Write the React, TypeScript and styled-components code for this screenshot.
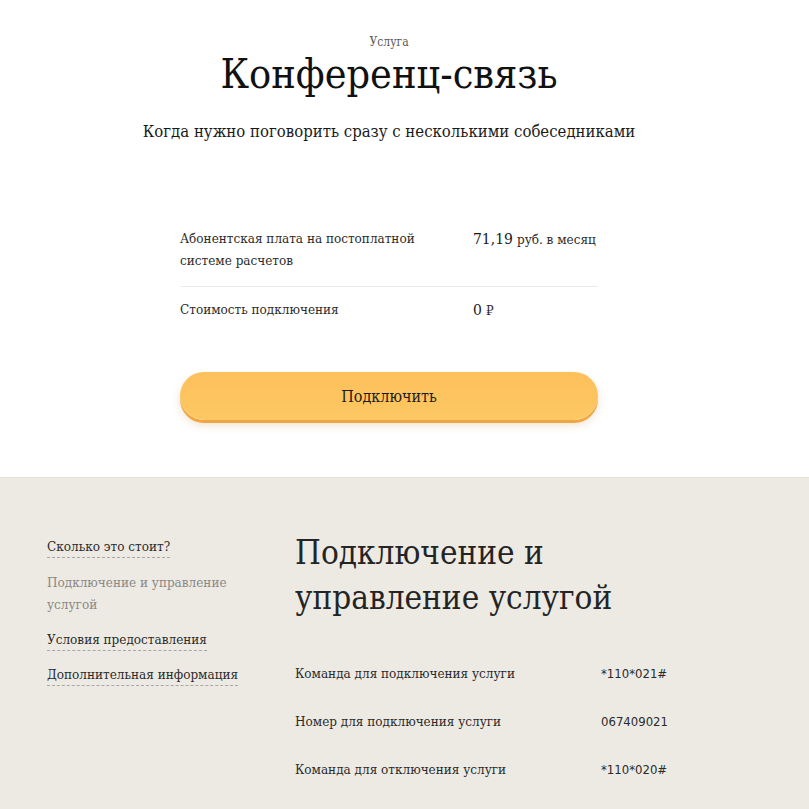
import styled, { createGlobalStyle } from 'styled-components'

const GlobalStyle = createGlobalStyle`
  html, body {
    margin: 0;
    padding: 0;
    background: #ffffff;
  }
  body {
    font-family: "DejaVu Serif Condensed", "DejaVu Serif", serif;
    color: #1f1f1f;
    -webkit-font-smoothing: antialiased;
  }
`

const Page = styled.div`
  width: 809px;
  min-height: 809px;
  overflow: hidden;
`

const Hero = styled.section`
  width: 778px;
  display: flex;
  flex-direction: column;
  align-items: center;
  padding: 34px 0 57px;
  background: #ffffff;
`

const Kicker = styled.div`
  font-size: 12px;
  line-height: 16px;
  color: #5a5a5a;
`

const Title = styled.h1`
  margin: 0;
  font-size: 41px;
  line-height: 48px;
  font-weight: 400;
  color: #111;
`

const Lead = styled.p`
  margin: 23px 0 0;
  font-size: 16.6px;
  line-height: 22px;
  color: #1a1a1a;
`

const PriceTable = styled.div`
  width: 418px;
  margin-top: 85px;
  display: flex;
  flex-direction: column;
`

const PriceRow = styled.div<{ $last?: boolean }>`
  display: grid;
  grid-template-columns: 293px 1fr;
  padding: ${p => (p.$last ? '12px 0 0' : '0 0 14px')};
  border-bottom: ${p => (p.$last ? 'none' : '1px solid #ebebeb')};
`

const PriceLabel = styled.div`
  font-size: 13.4px;
  line-height: 22px;
  color: #2b2b2b;
`

const PriceValue = styled.div`
  font-size: 13.4px;
  line-height: 22px;
  color: #2b2b2b;
  white-space: nowrap;
`

const Amount = styled.span`
  font-size: 15.5px;
  margin-right: 4px;
  color: #1a1a1a;
`

const ConnectButton = styled.button`
  width: 418px;
  height: 48px;
  margin-top: 50px;
  border: none;
  border-radius: 24px;
  background: linear-gradient(180deg, #fcc05c 0%, #fdc55f 70%, #fdc965 100%);
  box-shadow: 0 3px 0 #f0a542, 0 5px 8px rgba(190, 140, 60, 0.25);
  font-family: inherit;
  font-size: 16px;
  color: #1c1c1c;
  cursor: pointer;
`

const InfoSection = styled.section`
  background: #edeae4;
  border-top: 1px solid #e3e2da;
  display: grid;
  grid-template-columns: 248px 1fr;
  padding: 52px 0 40px 47px;
`

const SideNav = styled.nav`
  display: flex;
  flex-direction: column;
  gap: 14px;
  padding-top: 7px;
`

const NavLink = styled.a<{ $active?: boolean }>`
  align-self: flex-start;
  font-size: 13.4px;
  color: ${p => (p.$active ? '#8a8885' : '#2a2a2a')};
  text-decoration: none;
  border-bottom: ${p => (p.$active ? 'none' : '1px dashed #a9a7a2')};
  line-height: ${p => (p.$active ? '22px' : '20px')};
  max-width: 200px;
`

const Content = styled.div`
  display: flex;
  flex-direction: column;
`

const SectionTitle = styled.h2`
  margin: 0;
  font-size: 33px;
  line-height: 45px;
  font-weight: 400;
  color: #242424;
  width: 340px;
`

const CodeList = styled.div`
  margin-top: 43px;
  display: flex;
  flex-direction: column;
  gap: 26px;
  width: 380px;
`

const CodeRow = styled.div`
  display: grid;
  grid-template-columns: 306px 1fr;
  font-size: 13.4px;
  line-height: 22px;
  color: #2a2a2a;
`

const CodeValue = styled.span`
  font-family: "DejaVu Sans Condensed", "DejaVu Sans", sans-serif;
  font-size: 13px;
  white-space: nowrap;
`

const codes = [
  { label: 'Команда для подключения услуги', value: '*110*021#' },
  { label: 'Номер для подключения услуги', value: '067409021' },
  { label: 'Команда для отключения услуги', value: '*110*020#' },
]

const App = () => {
  return (
    <Page>
      <GlobalStyle />
      <Hero>
        <Kicker>Услуга</Kicker>
        <Title>Конференц-связь</Title>
        <Lead>Когда нужно поговорить сразу с несколькими собеседниками</Lead>
        <PriceTable>
          <PriceRow>
            <PriceLabel>
              Абонентская плата на постоплатной
              <br />
              системе расчетов
            </PriceLabel>
            <PriceValue>
              <Amount>71,19</Amount>руб. в месяц
            </PriceValue>
          </PriceRow>
          <PriceRow $last>
            <PriceLabel>Стоимость подключения</PriceLabel>
            <PriceValue>
              <Amount>0</Amount>₽
            </PriceValue>
          </PriceRow>
        </PriceTable>
        <ConnectButton>Подключить</ConnectButton>
      </Hero>
      <InfoSection>
        <SideNav>
          <NavLink>Сколько это стоит?</NavLink>
          <NavLink $active>Подключение и управление услугой</NavLink>
          <NavLink>Условия предоставления</NavLink>
          <NavLink>Дополнительная информация</NavLink>
        </SideNav>
        <Content>
          <SectionTitle>Подключение и управление услугой</SectionTitle>
          <CodeList>
            {codes.map(c => (
              <CodeRow key={c.value}>
                <span>{c.label}</span>
                <CodeValue>{c.value}</CodeValue>
              </CodeRow>
            ))}
          </CodeList>
        </Content>
      </InfoSection>
    </Page>
  )
}

export default App
